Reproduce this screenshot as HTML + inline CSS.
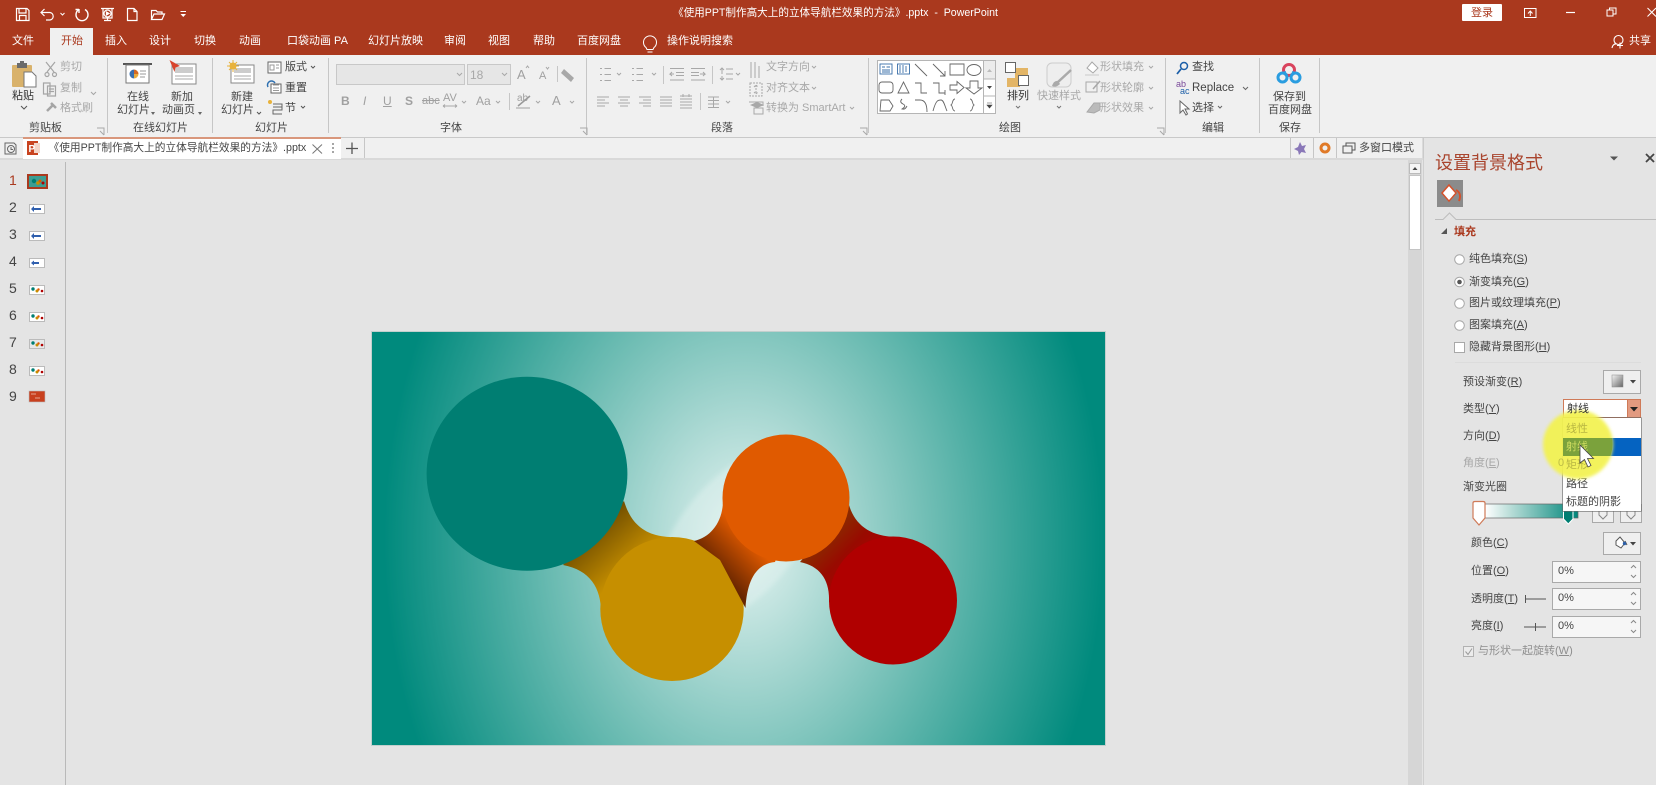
<!DOCTYPE html>
<html lang="zh"><head><meta charset="utf-8"><title>PowerPoint</title>
<style>
html,body{margin:0;padding:0;background:#e4e4e4}
#r{position:relative;width:1656px;height:785px;overflow:hidden;background:#e4e4e4;font-family:"Liberation Sans","Noto Sans CJK SC",sans-serif;filter:blur(.3px)}
.b{position:absolute}
.t{position:absolute;white-space:nowrap;line-height:14px;font-size:11px;color:#444}
.w{color:#fff}.g{color:#a8a8a8}.d{color:#333}
svg{position:absolute;left:0;top:0}
u{text-decoration-thickness:1px}
</style></head><body><div id="r">
<!-- title bar -->
<div class="b" style="left:0;top:0;width:1656px;height:55px;background:#aa391e"></div>
<div class="b" style="left:50px;top:28px;width:43px;height:27px;background:#f0f0f0"></div>
<div class="b" style="left:0;top:55px;width:1656px;height:82px;background:#f0f0f0"></div>
<div class="b" style="left:0;top:137px;width:1656px;height:1px;background:#c9c9c9"></div>
<div class="b" style="left:0;top:138px;width:1424px;height:20px;background:#f0f0f0"></div>
<div class="b" style="left:0;top:158px;width:1424px;height:2px;background:#d9d9d9"></div>
<div class="b" style="left:23px;top:137px;width:318px;height:22px;background:#fff;border-top:2px solid #d9977c;box-sizing:border-box"></div>
<div class="b" style="left:65px;top:162px;width:1px;height:623px;background:#b9b9b9"></div>
<div class="b" style="left:1408px;top:160px;width:14px;height:625px;background:#d6d6d6"></div>
<div class="b" style="left:1409px;top:163px;width:12px;height:11px;background:#f4f4f4;border:1px solid #bbb;box-sizing:border-box"></div>
<div class="b" style="left:1409px;top:175px;width:12px;height:75px;background:#fff;border:1px solid #c4c4c4;box-sizing:border-box"></div>
<div class="b" style="left:1423px;top:138px;width:1px;height:647px;background:#cfcfcf"></div>

<span class="t w" style="left:673px;top:6px;font-size:10.6px">《使用PPT制作高大上的立体导航栏效果的方法》.pptx &nbsp;-&nbsp; PowerPoint</span>
<div class="b" style="left:1462px;top:4px;width:40px;height:17px;background:#fff;border-radius:1px"></div>
<span class="t" style="left:1471px;top:6px;color:#aa391e">登录</span>
<span class="t w" style="left:12px;top:34px">文件</span>
<span class="t" style="left:61px;top:34px;color:#aa391e">开始</span>
<span class="t w" style="left:105px;top:34px">插入</span>
<span class="t w" style="left:149px;top:34px">设计</span>
<span class="t w" style="left:194px;top:34px">切换</span>
<span class="t w" style="left:239px;top:34px">动画</span>
<span class="t w" style="left:287px;top:34px">口袋动画 PA</span>
<span class="t w" style="left:368px;top:34px">幻灯片放映</span>
<span class="t w" style="left:444px;top:34px">审阅</span>
<span class="t w" style="left:488px;top:34px">视图</span>
<span class="t w" style="left:533px;top:34px">帮助</span>
<span class="t w" style="left:577px;top:34px">百度网盘</span>
<span class="t w" style="left:667px;top:34px">操作说明搜索</span>
<span class="t w" style="left:1629px;top:34px">共享</span>

<!-- ribbon text -->
<span class="t d" style="left:12px;top:89px">粘贴</span>
<span class="t g" style="left:60px;top:60px">剪切</span>
<span class="t g" style="left:60px;top:81px">复制</span>
<span class="t g" style="left:60px;top:101px">格式刷</span>
<span class="t" style="left:127px;top:90px">在线</span>
<span class="t" style="left:117px;top:103px">幻灯片</span>
<span class="t" style="left:171px;top:90px">新加</span>
<span class="t" style="left:162px;top:103px">动画页</span>
<span class="t" style="left:231px;top:90px">新建</span>
<span class="t" style="left:221px;top:103px">幻灯片</span>
<span class="t" style="left:285px;top:60px">版式</span>
<span class="t" style="left:285px;top:81px">重置</span>
<span class="t" style="left:285px;top:101px">节</span>
<span class="t g" style="left:766px;top:60px">文字方向</span>
<span class="t g" style="left:766px;top:81px">对齐文本</span>
<span class="t g" style="left:766px;top:101px">转换为 SmartArt</span>
<span class="t d" style="left:1007px;top:89px">排列</span>
<span class="t g" style="left:1037px;top:89px">快速样式</span>
<span class="t g" style="left:1100px;top:60px">形状填充</span>
<span class="t g" style="left:1100px;top:81px">形状轮廓</span>
<span class="t g" style="left:1100px;top:101px">形状效果</span>
<span class="t" style="left:1192px;top:60px">查找</span>
<span class="t" style="left:1192px;top:81px;font-size:11.5px">Replace</span>
<span class="t" style="left:1192px;top:101px">选择</span>
<span class="t" style="left:1273px;top:90px">保存到</span>
<span class="t" style="left:1268px;top:103px">百度网盘</span>
<span class="t" style="left:29px;top:121px">剪贴板</span>
<span class="t" style="left:133px;top:121px">在线幻灯片</span>
<span class="t" style="left:255px;top:121px">幻灯片</span>
<span class="t" style="left:440px;top:121px">字体</span>
<span class="t" style="left:711px;top:121px">段落</span>
<span class="t" style="left:999px;top:121px">绘图</span>
<span class="t" style="left:1202px;top:121px">编辑</span>
<span class="t" style="left:1279px;top:121px">保存</span>

<!-- tab bar text -->
<span class="t" style="left:48.500px;top:141px;font-size:10.700px">《使用PPT制作高大上的立体导航栏效果的方法》.pptx</span>
<span class="t" style="left:1359px;top:141px">多窗口模式</span>

<!-- thumbnails numbers -->
<span class="t" style="left:9px;top:173px;font-size:14px;color:#aa391e">1</span>
<span class="t" style="left:9px;top:200px;font-size:14px">2</span>
<span class="t" style="left:9px;top:227px;font-size:14px">3</span>
<span class="t" style="left:9px;top:254px;font-size:14px">4</span>
<span class="t" style="left:9px;top:281px;font-size:14px">5</span>
<span class="t" style="left:9px;top:308px;font-size:14px">6</span>
<span class="t" style="left:9px;top:335px;font-size:14px">7</span>
<span class="t" style="left:9px;top:362px;font-size:14px">8</span>
<span class="t" style="left:9px;top:389px;font-size:14px">9</span>

<!-- slide -->
<div class="b" style="left:372px;top:332px;width:733px;height:413px;background:radial-gradient(ellipse 360px 480px at 372px 208px,#e6f4f2 0%,#73bfb6 50%,#008a7d 100%);box-shadow:0 0 0 1px #c2cfcd"></div>
<svg width="1656" height="785" viewBox="0 0 1656 785">
<defs>
<linearGradient id="c1" gradientUnits="userSpaceOnUse" x1="590" y1="528" x2="628" y2="570"><stop offset="0" stop-color="#6e4c00"/><stop offset="1" stop-color="#c68f00"/></linearGradient>
<linearGradient id="c2" gradientUnits="userSpaceOnUse" x1="712" y1="566" x2="745" y2="535"><stop offset="0" stop-color="#662500"/><stop offset="1" stop-color="#e05a00"/></linearGradient>
<linearGradient id="c3" gradientUnits="userSpaceOnUse" x1="822" y1="538" x2="862" y2="576"><stop offset="0" stop-color="#8a2c00"/><stop offset=".5" stop-color="#980a00"/><stop offset="1" stop-color="#b00000"/></linearGradient>
<filter id="bl"><feGaussianBlur stdDeviation="2.500"/></filter>
<clipPath id="ye"><circle cx="1578" cy="444" r="34.500"/></clipPath>
</defs>
<ellipse cx="738" cy="537" rx="108" ry="58" transform="rotate(-50 738 537)" fill="#e6f4f2" opacity=".4" filter="url(#bl)"/>
<path d="M624 501C631 524 645 536 670 537L640 600 601 612C601 588 590 570 563 565Z" fill="url(#c1)"/>
<ellipse cx="672" cy="609" rx="71.7" ry="72" fill="#c68f00"/>
<path d="M849 505C855 525 870 536 895 537L880 590 829 602C830 580 820 566 800 562Z" fill="url(#c3)"/>
<ellipse cx="893" cy="600.5" rx="64" ry="64" fill="#b00000"/>
<path d="M723 497C724 520 712 537 694 541L720 560 745.5 608C747 582 755 564 775 562L790 520Z" fill="url(#c2)"/>
<ellipse cx="786" cy="498" rx="63.5" ry="63.5" fill="#e05a00"/>
<ellipse cx="527" cy="473.7" rx="100.4" ry="97" fill="#007e72"/>

<!-- separators -->
<g stroke="#c6c6c6" stroke-width="1" fill="none">
<path d="M107.500 58V133M212.500 58V133M328.500 58V133M586.500 58V133M868.500 58V133M1165.500 58V133M1259.500 58V133M1319.500 58V133"/>
<path d="M557.500 66V82M663.500 66V84M712.500 66V84M700.500 93V110M509.500 93V110"/>
<path d="M364.500 138V158M1290.500 138V158M1313.500 138V158M1336.500 138V158M1423 138V158"/>
</g>

<!-- titlebar icons -->
<g stroke="#fff" stroke-width="1.200" fill="none">
<path d="M16.500 8.500H27L29 10.500V20.500H16.500ZM19 9V13H26V9M19.500 20.500V15.500H26V20.500"/>
<path d="M44.500 9L41 12.500 44.500 16M41 12.500H50A3.800 3.800 0 0 1 50 20H46"/>
<path d="M60.500 13l2 2 2-2" stroke-width="1"/>
<path d="M79 9.500A6 6 0 1 0 85 9.500M79 9V13M79 9.500H75.500" stroke-width="1.400"/>
<path d="M101 8.500H114M103 9V18H112V9M104 20.500H111M107.500 18V20"/>
<circle cx="107.500" cy="13.500" r="3.500"/><path d="M106.500 12V15L109 13.500Z" fill="#fff"/>
<path d="M127.500 8.500H134L137 11.500V20.500H127.500ZM134 8.500V11.500H137"/>
<path d="M151.500 19.500V10.500H156L157.500 12H162V14M151.500 19.500L154 14H164.500L162 19.500Z"/>
<path d="M180.500 11.500H186" stroke-width="1"/><path d="M180.500 14H186L183.250 17Z" fill="#fff" stroke="none"/>
<path d="M1566 12.500H1575" stroke-width="1.200"/>
<path d="M1607 10H1613V16H1607ZM1609.500 10V8H1616V14H1613" stroke-width="1"/>
<path d="M1647.500 8L1656 16.500M1656 8L1647.500 16.500" stroke-width="1"/>
<path d="M1524.500 8.500H1536V17.500H1524.500ZM1530.300 16V11.500M1528 13.500L1530.300 11L1532.500 13.500" stroke-width="1"/>
<circle cx="1618.500" cy="40" r="4.500" stroke-width="1.100"/><path d="M1612 48C1612.500 45 1614 44 1616 43.800M1620 42.500V48.500M1617 45.500H1623" stroke-width="1.100"/>
<path d="M646 47.500A6.500 6.500 0 1 1 654 47.500L653 49.500H647ZM647.500 52H652.500" stroke-width="1"/>
</g>

<!-- clipboard -->
<rect x="12" y="65" width="20" height="22" fill="#d9b26b" rx="1"/>
<rect x="17" y="63" width="10" height="5" fill="#6b6b6b"/><rect x="20" y="61" width="4" height="3" fill="#6b6b6b"/>
<path d="M24 72H32L36 76V87H24Z" fill="#fff" stroke="#777"/>
<path d="M21 106l3 3 3-3" stroke="#555" fill="none"/>
<g stroke="#a5a5a5" fill="none" stroke-width="1.200">
<path d="M46 62L54 72M55 62L47 72"/><circle cx="47" cy="74.500" r="2"/><circle cx="54.500" cy="74.500" r="2"/>
<path d="M43.500 83H50V94H43.500ZM47.500 86H55.500V96H47.500ZM49 89H54M49 91.500H54"/>
<path d="M47 111L53 105M51 103L56 108" stroke-width="2.500"/>
<path d="M91 92l2.500 2.500 2.500-2.500" stroke-width="1"/>
</g>
<!-- online -->
<rect x="123" y="63" width="29" height="2" fill="#555"/>
<rect x="126" y="65" width="23" height="18" fill="#fff" stroke="#777"/>
<path d="M134 69.500A4.500 4.500 0 1 0 134 78.500Z" fill="#3a6fb0"/><path d="M134 69.500A4.500 4.500 0 0 1 138.500 74H134Z" fill="#d46a26"/><path d="M134 74H138.500A4.500 4.500 0 0 1 134 78.500Z" fill="#e9ab3f"/>
<path d="M140 71H146M140 74H146M140 77H145" stroke="#999"/>
<rect x="172" y="64" width="24" height="20" fill="#fff" stroke="#888"/><rect x="175" y="67" width="18" height="6" fill="#ccc"/><path d="M175 76H193M175 79H193" stroke="#aaa"/>
<path d="M169.500 60L180 66 175.500 67.500 174.500 72Z" fill="#d8432c"/>
<path d="M151 112l4 0-2 3ZM198 112l4 0-2 3Z" fill="#666"/>
<path d="M257 112l2 2 2-2" stroke="#555" fill="none"/>
<!-- new slide -->
<rect x="231" y="65" width="23" height="18" fill="#fff" stroke="#888"/><rect x="234" y="68" width="17" height="5" fill="#ccc"/><path d="M234 76H251M234 79H251" stroke="#aaa"/>
<circle cx="233" cy="66" r="3.500" fill="#e8b23a"/><path d="M233 60V72M227 66H239M229 62L237 70M237 62L229 70" stroke="#e8b23a"/>
<rect x="268" y="62" width="13" height="11" fill="#fff" stroke="#666"/><path d="M270 65H274V70H270ZM276 65H279M276 68H279" stroke="#999" fill="none"/>
<path d="M311 66l2 2 2-2M301 106l2 2 2-2" stroke="#555" fill="none"/>
<rect x="271" y="84" width="10" height="9" fill="#fff" stroke="#666"/><path d="M268 87A4 4 0 0 1 275 83" stroke="#2d6fb0" fill="none" stroke-width="1.500"/><path d="M273 85H279M273 88H279M273 90.500H279" stroke="#999"/>
<path d="M273 104H282V110H273V114H282M273 107H282" stroke="#666" fill="none"/><circle cx="270" cy="102" r="2" fill="#e8b23a"/>
<!-- font -->
<rect x="336.500" y="64.500" width="128" height="20" fill="#e6e6e6" stroke="#c8c8c8"/>
<rect x="467.500" y="64.500" width="43" height="20" fill="#e6e6e6" stroke="#c8c8c8"/>
<g stroke="#a8a8a8" fill="none">
<path d="M457 73l2.500 2.500 2.500-2.500M502 73l2.500 2.500 2.500-2.500M462 101l2 2 2-2M496 101l2 2 2-2M536 101l2 2 2-2M570 101l2 2 2-2"/>
<path d="M526 68l1.500-2 1.500 2M546 67l1.500 2 1.500-2"/>
<path d="M443 106H457M443 106l2-1.500M443 106l2 1.500M457 106l-2-1.500M457 106l-2 1.500"/>
</g>
<path d="M518 106L530 96" stroke="#999" stroke-width="1.500"/><rect x="516" y="107" width="14" height="2" fill="#c8c8c8"/>
<path d="M564 69L574 78 571 82 561 73Z" fill="#a8a8a8"/>
<!-- paragraph -->
<g stroke="#a8a8a8" fill="none" stroke-width="1">
<path d="M600 68.500H602M600 74.500H602M600 80.500H602M604.500 68.500H611M604.500 74.500H611M604.500 80.500H611"/>
<path d="M617 73l2 2 2-2M652 73l2 2 2-2M736 73l2 2 2-2"/>
<path d="M632 68.500H634M632 74.500H634M632 80.500H634M636.500 68.500H643M636.500 74.500H643M636.500 80.500H643"/>
<path d="M670 68.500H684M676 72.500H684M676 75.500H684M670 80H684M674 74H670l2-2M670 74l2 2"/>
<path d="M691 68.500H705M691 72.500H699M691 75.500H699M691 80H705M700 74H705l-2-2M705 74l-2 2"/>
<path d="M720 70l2-2 2 2M722 68V74M720 78l2 2 2-2M722 76V80M726 69H733M726 74H733M726 79H733"/>
<path d="M597 97H609M597 100H605M597 103H609M597 106H605"/>
<path d="M618 97H630M620 100H628M618 103H630M620 106H628"/>
<path d="M639 97H651M643 100H651M639 103H651M643 106H651"/>
<path d="M660 97H672M660 100H672M660 103H672M660 106H672"/>
<path d="M680 96H692M680 99H692M680 102H692M680 105H692M680 108H692M683 94V97M689 94V97"/>
<path d="M708 97H719M708 100.500H719M708 104H719M708 107.500H719M713.500 97V107.500"/>
<path d="M726 101l2 2 2-2"/>
<path d="M751 62V78M755 62V78M759 66V78"/>
<path d="M750 83H762V96H750ZM756 85V94M754 87l2-2 2 2M754 92l2 2 2-2" stroke-dasharray="2 1"/>
<path d="M749 102H763V106M754 108H763V114H754Z"/>
<path d="M812 66l2 2 2-2M812 87l2 2 2-2M850 107l2 2 2-2"/>
</g>
<path d="M750 105L757 102 764 105 757 108Z" fill="#a8a8a8"/>
<!-- gallery -->
<rect x="877.500" y="60.500" width="118" height="53" fill="#fff" stroke="#b5b5b5"/>
<rect x="983" y="61" width="12" height="18" fill="#ececec"/>
<path d="M983.500 61V113M983.500 79H995M983.500 96H995" stroke="#b5b5b5" fill="none"/>
<path d="M987 72l2.500-3 2.500 3Z" fill="#bbb"/><path d="M987 86l2.500 3 2.500-3Z" fill="#444"/><path d="M987 103H992M987 105l2.500 3 2.500-3Z" fill="#444" stroke="#444" stroke-width=".6"/>
<g stroke="#666" fill="none" stroke-width=".9">
<rect x="880" y="64" width="12" height="10" stroke="#3a6fa8"/><path d="M882 67H885M886.500 67H890M882 70H890M882 72H890" stroke="#3a6fa8"/>
<rect x="897.500" y="64" width="12" height="10" stroke="#3a6fa8"/><path d="M900 65V73M903 65V73M906 66V72" stroke="#3a6fa8"/>
<path d="M915 64L927 76M933 64L945 76M945 71V76H940M950 64H964V75H950ZM967 70a7 5.500 0 1 0 14 0a7 5.500 0 1 0-14 0"/>
<rect x="879" y="82" width="14" height="11" rx="3"/><path d="M898 93H909L903.500 82Z"/>
<path d="M915 83H921V93H927M933 83H939V93H945M945 90V95"/>
<path d="M950 85H957V81.500L964 87.500 957 93.500V90H950Z"/><path d="M970 81H978V88H982L974 94 966 88H970Z"/>
<path d="M881 100H889L893 106 890 111H880Z"/>
<path d="M902 99Q899 102 903 104T902 109Q905 110 907 106"/>
<path d="M915 100H920C925 100 927 105 927 112"/>
<path d="M933 111C936 100 938 100 941 100 944 100 945 107 947 111"/>
<path d="M958 99C955 99 956 104 954 105 956 106 955 111 958 111M973 99C976 99 975 104 977 105 975 106 976 111 973 111" transform="translate(-3,0)"/>
</g>
<!-- arrange -->
<rect x="1015" y="68" width="13" height="13" fill="#e3b566"/><rect x="1007" y="78" width="13" height="9" fill="#e3b566"/>
<rect x="1005.500" y="62.500" width="10" height="10" fill="#fff" stroke="#666"/><rect x="1018.500" y="75.500" width="10" height="10" fill="#fff" stroke="#666"/>
<path d="M1016 106l2 2 2-2M1057 106l2 2 2-2" stroke="#777" fill="none"/>
<rect x="1047" y="63" width="24" height="24" rx="5" fill="#eee" stroke="#ccc"/>
<path d="M1071 70L1058 82" stroke="#aaa" stroke-width="2.500"/><path d="M1052 86Q1054 80 1058 81L1060 84Q1056 88 1052 86Z" fill="#aaa"/>
<g stroke="#a8a8a8" fill="none">
<path d="M1092 62L1098 68 1093 73 1087 68Z" fill="#fff"/><rect x="1085" y="74" width="14" height="2" fill="#ddd" stroke="none"/>
<path d="M1086 82H1097V92H1086Z"/><path d="M1093 89L1100 81" stroke-width="1.500"/>
<path d="M1087 112L1094 103H1100V110L1094 113Z" fill="#bbb"/>
<path d="M1149 66l2 2 2-2M1149 87l2 2 2-2M1149 107l2 2 2-2"/>
</g>
<!-- editing -->
<circle cx="1184" cy="66" r="3.500" fill="none" stroke="#1c5fa8" stroke-width="1.500"/><path d="M1181 69L1177 74" stroke="#1c5fa8" stroke-width="1.800"/>
<text x="1176" y="87" font-size="9" fill="#7a4a9a" font-family="Liberation Sans">ab</text>
<text x="1180" y="94" font-size="9" fill="#1c5fa8" font-family="Liberation Sans">ac</text>
<path d="M1180 101V113L1183 110 1186 115 1187.500 114 1185 109H1189Z" fill="#fff" stroke="#666"/>
<path d="M1243 87l2.500 2.500 2.500-2.500M1218 106l2 2 2-2" stroke="#666" fill="none"/>
<!-- baidu -->
<circle cx="1289" cy="70" r="5.500" fill="none" stroke="#d9435d" stroke-width="3"/>
<circle cx="1282.500" cy="77.500" r="4.500" fill="none" stroke="#2a9de0" stroke-width="3"/>
<circle cx="1295.500" cy="77.500" r="4.500" fill="none" stroke="#2a9de0" stroke-width="3"/>
<path d="M1286 72L1283 73M1292 72L1295 73" stroke="#2a9de0" stroke-width="2"/>
<!-- group launchers -->
<g stroke="#a8a8a8" fill="none">
<path d="M97 128H104V135M100 131L104 135M580 128H587V135M583 131L587 135M860 128H867V135M863 131L867 135M1157 128H1164V135M1160 131L1164 135"/>
</g>
<!-- tab bar icons -->
<g fill="none" stroke="#666">
<path d="M5 143H14L16 145V154H5Z"/><circle cx="11" cy="149" r="3.500"/>
<path d="M11 147V149.500H13"/>
<path d="M312.500 144.500L322 153.500M322 144.500L312.500 153.500" stroke="#777"/>
<path d="M352 142.500V154M346 148.500H358" stroke="#555" stroke-width="1.300"/>
</g>
<circle cx="333" cy="144" r=".9" fill="#666"/><circle cx="333" cy="148" r=".9" fill="#666"/><circle cx="333" cy="152" r=".9" fill="#666"/>
<rect x="27" y="141" width="11" height="14" fill="#c8431f"/><rect x="34" y="143" width="6" height="10" fill="#f4d5c8"/>
<text x="28.500" y="152" font-size="10" font-weight="bold" fill="#fff" font-family="Liberation Sans">P</text>
<path d="M1300 142L1302 146 1306 145 1304 149 1306 153 1301.500 152 1299 155 1298 151 1294 149 1298 147Z" fill="#8a78b8"/>
<circle cx="1325" cy="148" r="4" fill="none" stroke="#e07a28" stroke-width="3"/>
<path d="M1343 146H1352V153H1343ZM1346 146V143H1355V150H1352" fill="none" stroke="#555"/>
<!-- scrollbar arrow -->
<path d="M1412.500 170l2.500-3 2.500 3Z" fill="#444"/>
<!-- panel -->
<path d="M1610 156.500H1618L1614 160.500Z" fill="#555"/>
<path d="M1646 154L1654 162M1654 154L1646 162" stroke="#444" stroke-width="1.800"/>
<rect x="1437" y="180" width="26" height="27" fill="#8b8b8b"/>
<path d="M1449 185L1456 193 1449 201 1442 193Z" fill="#fff" stroke="#d6512a" stroke-width="1.500"/>
<path d="M1456 190C1460 192 1461 196 1459 201" stroke="#d6512a" stroke-width="2" fill="none"/><path d="M1443 193H1455L1449 200Z" fill="#fff"/>
<path d="M1435 219.500H1443L1449.500 213 1456 219.500H1656" stroke="#bdbdbd" fill="none"/>
<path d="M1441 234H1447V228Z" fill="#555"/>
</svg>

<!-- font row text -->
<span class="t" style="left:470px;top:68px;font-size:12px;color:#a8a8a8">18</span>
<span class="t" style="left:517px;top:68px;font-size:13px;color:#a0a0a0">A</span>
<span class="t" style="left:539px;top:69px;font-size:11px;color:#a0a0a0">A</span>
<span class="t" style="left:341px;top:94px;font-weight:bold;font-size:12px;color:#a0a0a0">B</span>
<span class="t" style="left:363px;top:94px;font-style:italic;font-size:12px;color:#a0a0a0">I</span>
<span class="t" style="left:383px;top:94px;text-decoration:underline;font-size:12px;color:#a0a0a0">U</span>
<span class="t" style="left:405px;top:94px;font-weight:bold;font-size:12px;color:#a0a0a0">S</span>
<span class="t" style="left:422px;top:94px;text-decoration:line-through;font-size:11px;color:#a0a0a0">abc</span>
<span class="t" style="left:443px;top:91px;font-size:11px;color:#a0a0a0">AV</span>
<span class="t" style="left:476px;top:94px;font-size:12px;color:#a0a0a0">Aa</span>
<span class="t" style="left:517px;top:92px;font-size:10px;color:#a0a0a0">ab</span>
<span class="t" style="left:552px;top:94px;font-size:13px;color:#a0a0a0">A</span>

<span class="t" style="left:1435px;top:153px;font-size:18px;line-height:20px;color:#a9452e">设置背景格式</span>
<span class="t" style="left:1454px;top:225px;font-weight:bold;color:#aa391e">填充</span>
<span class="t" style="left:1469px;top:252px">纯色填充(<u>S</u>)</span>
<span class="t" style="left:1469px;top:275px">渐变填充(<u>G</u>)</span>
<span class="t" style="left:1469px;top:296px">图片或纹理填充(<u>P</u>)</span>
<span class="t" style="left:1469px;top:318px">图案填充(<u>A</u>)</span>
<span class="t" style="left:1469px;top:340px">隐藏背景图形(<u>H</u>)</span>
<span class="t" style="left:1463px;top:375px">预设渐变(<u>R</u>)</span>
<span class="t" style="left:1463px;top:402px">类型(<u>Y</u>)</span>
<span class="t" style="left:1463px;top:429px">方向(<u>D</u>)</span>
<span class="t g" style="left:1463px;top:456px">角度(<u>E</u>)</span>
<span class="t" style="left:1463px;top:480px">渐变光圈</span>
<span class="t" style="left:1471px;top:536px">颜色(<u>C</u>)</span>
<span class="t" style="left:1471px;top:564px">位置(<u>O</u>)</span>
<span class="t" style="left:1471px;top:592px">透明度(<u>T</u>)</span>
<span class="t" style="left:1471px;top:619px">亮度(<u>I</u>)</span>
<span class="t g" style="left:1478px;top:644px;color:#8e8e8e">与形状一起旋转(<u>W</u>)</span>

<!-- panel shapes -->
<svg width="1656" height="785" viewBox="0 0 1656 785">
<defs>
<linearGradient id="pg" x1="0" x2="1"><stop offset="0" stop-color="#fff"/><stop offset=".25" stop-color="#bfe0db"/><stop offset="1" stop-color="#00867a"/></linearGradient>
<linearGradient id="pr" x1="0" y1="0" x2="1" y2="1"><stop offset="0" stop-color="#f5f5f5"/><stop offset="1" stop-color="#666"/></linearGradient>
</defs>
<g fill="#fff" stroke="#a8a8a8">
<circle cx="1459.500" cy="259.500" r="4.800"/><circle cx="1459.500" cy="282" r="4.800"/><circle cx="1459.500" cy="303.500" r="4.800"/><circle cx="1459.500" cy="325.500" r="4.800"/>
<rect x="1454.500" y="342.500" width="10" height="10"/>
</g>
<circle cx="1459.500" cy="282" r="2.300" fill="#555"/>
<path d="M1455 362.500H1641" stroke="#dcdcdc"/>
<g fill="#efefef" stroke="#a9a9a9">
<rect x="1603.500" y="370.500" width="37" height="23"/>
<rect x="1603.500" y="532.500" width="37" height="22"/>
<rect x="1552.500" y="561.500" width="88" height="21" fill="#f6f6f6"/>
<rect x="1552.500" y="588.500" width="88" height="21" fill="#f6f6f6"/>
<rect x="1552.500" y="616.500" width="88" height="21" fill="#f6f6f6"/>
<rect x="1592.500" y="504.500" width="21" height="18"/>
<rect x="1620.500" y="504.500" width="21" height="18"/>
</g>
<rect x="1612" y="375" width="11" height="12" fill="url(#pr)" stroke="#888" stroke-width=".5"/>
<path d="M1630 380h6l-3 3.500ZM1630 542h6l-3 3.500Z" fill="#444"/>
<path d="M1616 541L1620 537 1625 543 1621 548 1616 545ZM1625 541L1627 545" fill="#fff" stroke="#555"/>
<circle cx="1624.500" cy="543.500" r="1.700" fill="#2c5fa8"/>
<g stroke="#888" fill="none">
<path d="M1631 568l2.500-2.500 2.500 2.500M1631 575l2.500 2.500 2.500-2.500M1631 595l2.500-2.500 2.500 2.500M1631 602l2.500 2.500 2.500-2.500M1631 623l2.500-2.500 2.500 2.500M1631 630l2.500 2.500 2.500-2.500"/>
<path d="M1599 510H1607V515L1603 519 1599 515ZM1627 510H1635V515L1631 519 1627 515Z"/>
</g>
<path d="M1525.500 595V603M1526 599H1546M1524 627H1546M1535.500 623V631" stroke="#555" fill="none"/>
<!-- gradient bar -->
<rect x="1485" y="504" width="93" height="14" fill="url(#pg)" stroke="#666" stroke-width=".7"/>
<path d="M1473 503Q1473 501.500 1475 501.500H1483Q1485 501.500 1485 503V518L1479 525 1473 518Z" fill="#fff" stroke="#cf7a58" stroke-width="1.200"/>
<path d="M1563.500 510H1573V519L1568.250 524 1563.500 519Z" fill="#007e72" stroke="#fff"/>
<!-- check -->
<rect x="1463.500" y="646.500" width="10" height="10" fill="#ececec" stroke="#b2b2b2"/>
<path d="M1465.500 651.500L1468 654.500 1472 648.500" stroke="#9a9a9a" fill="none"/>
</svg>
<span class="t" style="left:1558px;top:564px">0%</span>
<span class="t" style="left:1558px;top:591px">0%</span>
<span class="t" style="left:1558px;top:619px">0%</span>

<!-- dropdown -->
<div class="b" style="left:1563px;top:399px;width:78px;height:19px;background:#fff;border:1px solid #cf7a58;box-sizing:border-box"></div>
<div class="b" style="left:1627px;top:399px;width:14px;height:19px;background:#e29a80;border:1px solid #cf7a58;box-sizing:border-box"></div>
<div class="b" style="left:1563px;top:418px;width:78px;height:93px;background:#fff;box-shadow:0 0 0 .6px #666"></div>
<div class="b" style="left:1563px;top:438px;width:78px;height:18px;background:#0563c1"></div>
<span class="t" style="left:1566px;top:477px">路径</span>
<span class="t" style="left:1566px;top:495px">标题的阴影</span>
<div class="b" style="left:1543px;top:409.500px;width:70px;height:69px;border-radius:50%;background:#f3f250;opacity:.93;filter:blur(1.500px)"></div>
<svg width="1656" height="785" viewBox="0 0 1656 785">
<path d="M1630 407h8l-4 4.500Z" fill="#222"/>
<rect x="1563" y="438" width="78" height="18" fill="#7ba23c" clip-path="url(#ye)"/>
</svg>
<span class="t" style="left:1558px;top:456px;color:#bdbc48">0</span>
<span class="t" style="left:1566px;top:422px;color:#b8b642">线性</span>
<span class="t" style="left:1566px;top:440px;color:#d0dd60">射线</span>
<span class="t" style="left:1566px;top:458px;color:#b8b642">矩形</span>
<span class="t" style="left:1567px;top:402px;color:#333">射线</span>
<svg width="1656" height="785" viewBox="0 0 1656 785">
<path d="M1580 445V463L1584.500 459.500 1588 467 1591 465.500 1587.500 458.500H1593.500Z" fill="#fff" stroke="#444" stroke-width=".8"/>
</svg>

<!-- thumbnails -->
<div class="b" style="left:27px;top:174px;width:21px;height:15px;background:#aa391e"></div>
<div class="b" style="left:29px;top:176px;width:17px;height:11px;background:#3c9d92"></div>
<svg width="1656" height="785" viewBox="0 0 1656 785">
<g><circle cx="34" cy="181" r="2.200" fill="#007e72"/><circle cx="38" cy="183" r="1.800" fill="#c68f00"/><circle cx="40" cy="181" r="1.500" fill="#e05a00"/><circle cx="43" cy="183" r="1.500" fill="#b00000"/></g>
<g fill="#fff" stroke="#bbb">
<rect x="29.500" y="204.500" width="15" height="9"/><rect x="29.500" y="231.500" width="15" height="9"/><rect x="29.500" y="258.500" width="15" height="9"/>
<rect x="29.500" y="285.500" width="15" height="9"/><rect x="29.500" y="312.500" width="15" height="9"/><rect x="29.500" y="339.500" width="15" height="9" fill="#e8e8e8"/><rect x="29.500" y="366.500" width="15" height="9"/>
</g>
<g fill="#2f5fae"><path d="M31 209L34 206V208H41V210H34V212Z"/><path d="M31 236L34 233V235H41V237H34V239Z"/><path d="M31 263L34 260.500V262H39V264H34V265.500Z"/></g>
<g id="dots"><circle cx="33" cy="289" r="1.700" fill="#007e72"/><circle cx="37" cy="291" r="1.500" fill="#c68f00"/><circle cx="38.500" cy="289.500" r="1.200" fill="#e05a00"/><circle cx="42" cy="291" r="1.300" fill="#b00000"/></g>
<use href="#dots" y="27"/><use href="#dots" y="54"/><use href="#dots" y="81"/>
<rect x="29" y="391" width="16" height="11" fill="#c8401e" stroke="#bbb" stroke-width=".6"/>
<path d="M31 394H36M35 398H40" stroke="#eec8b8" stroke-width=".8"/>
</svg>
</div></body></html>
